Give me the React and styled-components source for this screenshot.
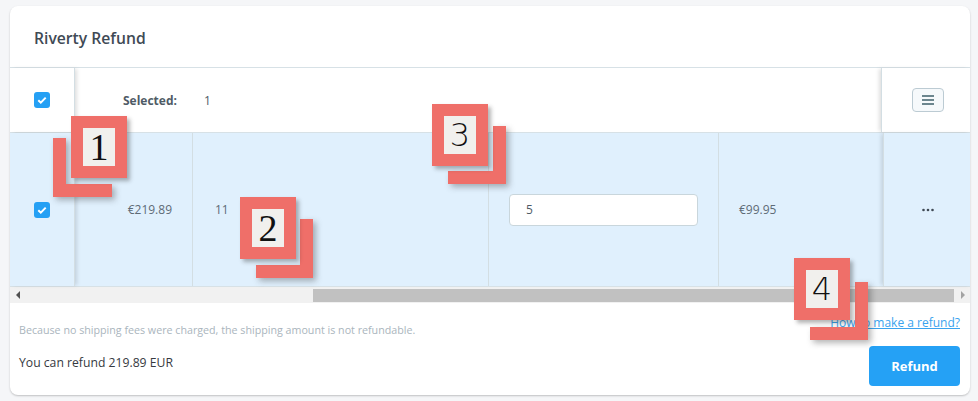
import React from 'react';
import styled, { createGlobalStyle } from 'styled-components';

const GlobalStyle = createGlobalStyle`
  body {
    margin: 0;
    background: #f5f6f8;
    font-family: "Open Sans", "Noto Sans", "Liberation Sans", sans-serif;
    color: #363a41;
  }
`;

const Page = styled.div`
  position: relative;
  width: 978px;
  height: 401px;
  padding: 6px 8px 0 10px;
  box-sizing: border-box;
`;

const Card = styled.div`
  width: 960px;
  background: #fff;
  border-radius: 8px;
  box-shadow: 0 1px 2px rgba(0, 0, 0, 0.22);
  overflow: hidden;
`;

const CardHeader = styled.div`
  height: 62px;
  display: flex;
  align-items: center;
  padding: 2px 24px 0;
  box-sizing: border-box;
  border-bottom: 1px solid #d7e1e6;
`;

const Title = styled.h3`
  margin: 0;
  font-size: 15.7px;
  font-weight: 600;
  color: #3f4a55;
`;

const Row = styled.div`
  display: flex;
  height: ${(p) => p.$height}px;
  background: ${(p) => (p.$selected ? '#e0f0fd' : '#fff')};
  border-bottom: 1px solid #d7e1e6;
`;

const Cell = styled.div`
  width: ${(p) => p.$width}px;
  flex: ${(p) => (p.$grow ? '1' : 'none')};
  display: flex;
  align-items: center;
  justify-content: ${(p) => p.$justify || 'flex-start'};
  padding: 0 ${(p) => p.$pad ?? 20}px;
  box-sizing: border-box;
  font-size: 12px;
  color: #5e6b76;
  border-right: ${(p) => (p.$line ? '1px solid #d3dee3' : 'none')};
`;

const StickyCell = styled.div`
  position: relative;
  z-index: 1;
  width: ${(p) => p.$width}px;
  flex: none;
  display: flex;
  align-items: center;
  justify-content: center;
  background: inherit;
  border-${(p) => (p.$side === 'left' ? 'right' : 'left')}: 1px solid #d3dee3;
  box-shadow: ${(p) => (p.$side === 'left' ? '3px' : '-3px')} 0 4px -1px rgba(0, 0, 0, 0.13);
`;

const Check = styled.span`
  width: 16px;
  height: 16px;
  border-radius: 3px;
  background: #25a0f4;
  display: flex;
  align-items: center;
  justify-content: center;
`;

const SelectedLabel = styled.span`
  font-weight: 700;
  color: #4f5b66;
  font-size: 12px;
  margin-right: 27px;
`;

const SelectedCount = styled.span`
  color: #4f5b66;
`;

const MenuButton = styled.button`
  width: 32px;
  height: 24px;
  border: 1px solid #bccbd3;
  border-radius: 4px;
  background: #f6f9fb;
  display: flex;
  align-items: center;
  justify-content: center;
  padding: 0;
  margin-left: 4px;
`;

const QtyInput = styled.input`
  width: 189px;
  height: 32px;
  box-sizing: border-box;
  border: 1px solid #c9d6dc;
  border-radius: 4px;
  background: #fff;
  padding: 0 16px;
  font-family: inherit;
  font-size: 12px;
  color: #4f5b66;
`;

const ScrollBar = styled.div`
  display: flex;
  height: 16px;
  background: #f1f1f1;
`;

const ScrollArrow = styled.div`
  width: 16px;
  display: flex;
  align-items: center;
  justify-content: center;
  flex: none;
`;

const ScrollTrack = styled.div`
  flex: 1;
  display: flex;
  align-items: center;
  padding-left: ${(p) => p.$offset}px;
`;

const Thumb = styled.div`
  flex: 1;
  height: 13px;
  background: #c1c1c1;
`;

const Footer = styled.div`
  padding: 11px 10px 9px 9px;
  display: flex;
  flex-direction: column;
  gap: 9px;
`;

const FooterRow = styled.div`
  display: flex;
  justify-content: space-between;
  align-items: flex-start;
`;

const Notice = styled.span`
  font-size: 10.7px;
  color: #aab5bd;
  padding-top: 9px;
`;

const HelpLink = styled.a`
  font-size: 12px;
  color: #3aa3ee;
  text-decoration: underline;
`;

const Amount = styled.span`
  font-size: 12.2px;
  color: #363a41;
  padding-top: 8px;
`;

const RefundButton = styled.button`
  width: 91px;
  height: 40px;
  border: none;
  border-radius: 4px;
  background: #25a1f5;
  color: #fff;
  font-family: inherit;
  font-size: 13px;
  font-weight: 700;
`;

const MarkerBox = styled.div`
  position: absolute;
  left: ${(p) => p.$x}px;
  top: ${(p) => p.$y}px;
  width: 32px;
  height: 38px;
  border: 12px solid #ef6f69;
  background: #f1f0ed;
  box-shadow: 3px 3px 4px rgba(40, 40, 40, 0.35);
  display: flex;
  align-items: center;
  justify-content: center;
  font-family: ${(p) => (p.$serif ? '"Liberation Serif", serif' : '"DejaVu Sans", sans-serif')};
  font-weight: ${(p) => (p.$serif ? 400 : 200)};
  font-size: ${(p) => (p.$serif ? 38 : 32)}px;
  line-height: 1;
  color: #111;
  z-index: 3;
`;

const MarkerBracket = styled.div`
  position: absolute;
  left: ${(p) => p.$x}px;
  top: ${(p) => p.$y}px;
  width: ${(p) => p.$w}px;
  height: ${(p) => p.$h}px;
  box-sizing: border-box;
  border-bottom: 13px solid #ef6f69;
  border-${(p) => p.$side}: 13px solid #ef6f69;
  filter: drop-shadow(3px 3px 3px rgba(40, 40, 40, 0.35));
  z-index: 2;
`;

const CheckIcon = () => (
  <svg width="10" height="8" viewBox="0 0 10 8">
    <path d="M1.3 4.2 L3.8 6.6 L8.7 1.6" stroke="#fff" strokeWidth="2" fill="none" />
  </svg>
);

const MenuIcon = () => (
  <svg width="12" height="10" viewBox="0 0 12 10">
    <rect x="0" y="0" width="12" height="2" fill="#6c868e" />
    <rect x="0" y="4" width="12" height="2" fill="#6c868e" />
    <rect x="0" y="8" width="12" height="2" fill="#6c868e" />
  </svg>
);

const DotsIcon = () => (
  <svg width="12" height="4" viewBox="0 0 12 4">
    <circle cx="1.5" cy="2" r="1.3" fill="#3f4a55" />
    <circle cx="6" cy="2" r="1.3" fill="#3f4a55" />
    <circle cx="10.5" cy="2" r="1.3" fill="#3f4a55" />
  </svg>
);

const Triangle = ({ dir, color }) => (
  <svg width="5" height="8" viewBox="0 0 5 8">
    <path d={dir === 'left' ? 'M4 0 L0 4 L4 8 Z' : 'M1 0 L5 4 L1 8 Z'} fill={color} />
  </svg>
);

const markers = [
  { n: '1', x: 71, y: 116, serif: true, bracket: { x: 53, y: 138, w: 59, h: 59, side: 'left' } },
  { n: '2', x: 240, y: 197, serif: true, bracket: { x: 256, y: 219, w: 57, h: 59, side: 'right' } },
  { n: '3', x: 432, y: 104, serif: false, bracket: { x: 448, y: 126, w: 58, h: 58, side: 'right' } },
  { n: '4', x: 794, y: 258, serif: false, bracket: { x: 810, y: 282, w: 58, h: 58, side: 'right' } },
];

const App = () => {
  return (
    <Page>
      <GlobalStyle />
      <Card>
        <CardHeader>
          <Title>Riverty Refund</Title>
        </CardHeader>

        <Row $height={64}>
          <StickyCell $width={64} $side="left">
            <Check><CheckIcon /></Check>
          </StickyCell>
          <Cell $grow $pad={48}>
            <SelectedLabel>Selected:</SelectedLabel>
            <SelectedCount>1</SelectedCount>
          </Cell>
          <StickyCell $width={88} $side="right">
            <MenuButton><MenuIcon /></MenuButton>
          </StickyCell>
        </Row>

        <Row $height={153} $selected>
          <StickyCell $width={64} $side="left">
            <Check><CheckIcon /></Check>
          </StickyCell>
          <Cell $width={118} $justify="flex-end" $line>€219.89</Cell>
          <Cell $width={296} $pad={22} $line>11</Cell>
          <Cell $width={230} $line>
            <QtyInput defaultValue="5" />
          </Cell>
          <Cell $width={164}>€99.95</Cell>
          <StickyCell $width={88} $side="right">
            <DotsIcon />
          </StickyCell>
        </Row>

        <ScrollBar>
          <ScrollArrow><Triangle dir="left" color="#505050" /></ScrollArrow>
          <ScrollTrack $offset={287}>
            <Thumb />
          </ScrollTrack>
          <ScrollArrow><Triangle dir="right" color="#a3a3a3" /></ScrollArrow>
        </ScrollBar>

        <Footer>
          <FooterRow>
            <Notice>Because no shipping fees were charged, the shipping amount is not refundable.</Notice>
            <HelpLink href="#">How to make a refund?</HelpLink>
          </FooterRow>
          <FooterRow>
            <Amount>You can refund 219.89 EUR</Amount>
            <RefundButton>Refund</RefundButton>
          </FooterRow>
        </Footer>
      </Card>

      {markers.map((m) => (
        <React.Fragment key={m.n}>
          <MarkerBracket $x={m.bracket.x} $y={m.bracket.y} $w={m.bracket.w} $h={m.bracket.h} $side={m.bracket.side} />
          <MarkerBox $x={m.x} $y={m.y} $serif={m.serif}>{m.n}</MarkerBox>
        </React.Fragment>
      ))}
    </Page>
  );
};

export default App;
